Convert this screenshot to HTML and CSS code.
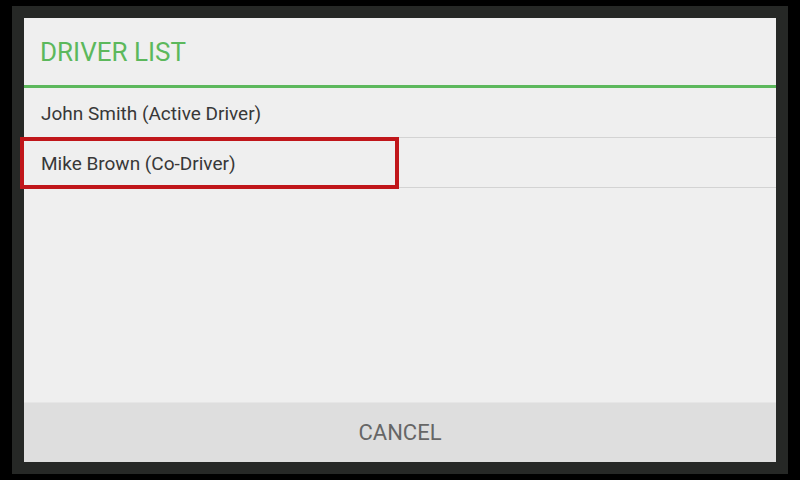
FILE: index.html
```html
<!DOCTYPE html>
<html>
<head>
<meta charset="utf-8">
<link rel="stylesheet" href="styles.css">
</head>
<body>
<div class="frame">
  <div class="dialog">
    <div class="title">DRIVER LIST</div>
    <div class="list">
      <div class="row">John Smith (Active Driver)</div>
      <div class="row selected">Mike Brown (Co-Driver)</div>
    </div>
    <div class="cancel">CANCEL</div>
  </div>
</div>
</body>
</html>
```
FILE: styles.css
```css
html, body {
  margin: 0;
  padding: 0;
  background: #000;
  width: 800px;
  height: 480px;
  overflow: hidden;
  font-family: Roboto, "Liberation Sans", sans-serif;
}
.frame {
  margin: 6px 12px 0 12px;
  width: 752px;
  height: 444px;
  padding: 12px;
  background: #262826;
  display: flex;
}
.dialog {
  flex: 1;
  background: #efefef;
  display: flex;
  flex-direction: column;
}
.title {
  height: 70px;
  box-sizing: border-box;
  padding: 19px 0 0 16px;
  color: #5cb85c;
  font-size: 26px;
  line-height: 30px;
  border-bottom: 3px solid #5cb85c;
}
.list {
  flex: 1;
  display: flex;
  flex-direction: column;
}
.row {
  position: relative;
  height: 50px;
  box-sizing: border-box;
  border-bottom: 1px solid #d3d3d3;
  padding: 2px 0 0 17px;
  font-size: 19px;
  line-height: 47px;
  color: #383838;
}
.row.selected::after {
  content: "";
  position: absolute;
  left: -4px;
  top: -1px;
  width: 371px;
  height: 44px;
  border: 4px solid #c0161a;
}
.cancel {
  height: 60px;
  background: #dedede;
  border-top: 1px solid #e6e6e6;
  box-sizing: border-box;
  text-align: center;
  line-height: 60px;
  font-size: 22px;
  color: #666;
}
```
